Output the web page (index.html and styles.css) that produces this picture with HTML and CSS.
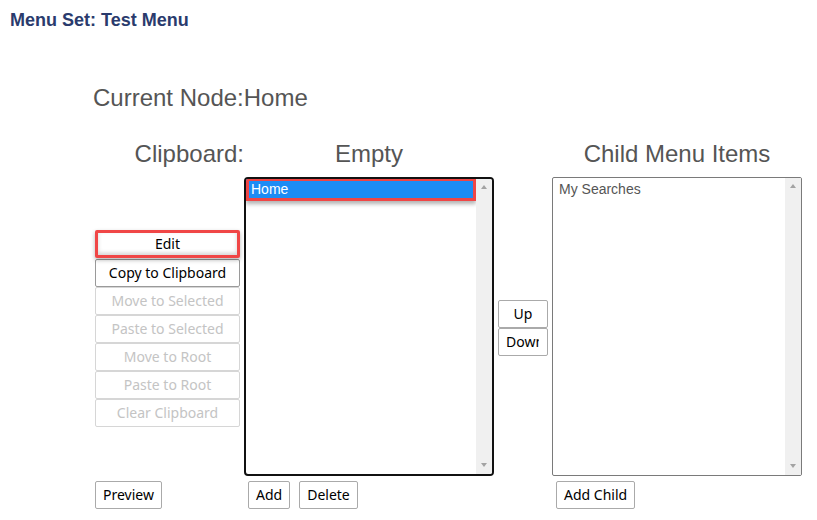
FILE: index.html
```html
<!DOCTYPE html>
<html>
<head>
<meta charset="utf-8">
<link rel="stylesheet" href="styles.css">
</head>
<body>
<div class="title">Menu Set: Test Menu</div>
<div class="current">Current Node:Home</div>
<div class="editor">
  <div class="heading heading--clip">Clipboard:</div>
  <div class="heading">Empty</div>
  <div></div>
  <div class="heading">Child Menu Items</div>

  <div class="actions">
    <button class="btn btn--block btn--focus">Edit</button>
    <button class="btn btn--block">Copy to Clipboard</button>
    <button class="btn btn--block" disabled>Move to Selected</button>
    <button class="btn btn--block" disabled>Paste to Selected</button>
    <button class="btn btn--block" disabled>Move to Root</button>
    <button class="btn btn--block" disabled>Paste to Root</button>
    <button class="btn btn--block" disabled>Clear Clipboard</button>
  </div>

  <div class="listbox listbox--active">
    <div class="options">
      <div class="option option--selected">Home</div>
    </div>
    <div class="scrollbar">
      <span class="arrow arrow--up"></span>
      <span class="arrow arrow--down"></span>
    </div>
  </div>

  <div class="order">
    <button class="btn btn--order">Up</button>
    <button class="btn btn--order"><span class="clip">Down</span></button>
  </div>

  <div class="listbox">
    <div class="options options--plain">
      <div class="option">My Searches</div>
    </div>
    <div class="scrollbar">
      <span class="arrow arrow--up"></span>
      <span class="arrow arrow--down"></span>
    </div>
  </div>

  <div class="foot"><button class="btn">Preview</button></div>
  <div class="foot foot--inset"><button class="btn">Add</button><button class="btn">Delete</button></div>
  <div></div>
  <div class="foot foot--inset"><button class="btn">Add Child</button></div>
</div>
</body>
</html>
```

FILE: styles.css
```css
* { box-sizing: border-box; }
body {
  margin: 0;
  background: #fff;
  font-family: "Liberation Sans", Arial, sans-serif;
}
.title {
  padding: 10px 0 0 10px;
  font-size: 18px;
  line-height: 21px;
  font-weight: bold;
  color: #2a3b6d;
}
.current {
  margin-top: 53px;
  padding-left: 93px;
  font-size: 24px;
  line-height: 28px;
  color: #555;
}
.editor {
  margin-top: 28px;
  padding-left: 95px;
  display: grid;
  grid-template-columns: 145px 250px 50px 250px;
  column-gap: 4px;
  align-items: start;
}
.heading {
  font-size: 24px;
  line-height: 28px;
  color: #555;
  text-align: center;
  white-space: nowrap;
}
.heading--clip {
  text-align: right;
  margin-right: -4px;
}
.btn {
  font-family: "Noto Sans", "Open Sans", sans-serif;
  font-size: 14px;
  height: 28px;
  line-height: 26px;
  padding: 0 7px;
  background: #fff;
  color: #000;
  border: 1px solid #9a9a9a;
  border-radius: 2px;
  white-space: nowrap;
  cursor: default;
}
.btn:disabled {
  color: #c4c4c4;
  border-color: #d6d6d6;
}
.btn--block {
  display: block;
  width: 145px;
  padding: 0;
  text-align: center;
}
.actions {
  margin-top: 62px;
  display: flex;
  flex-direction: column;
}
.btn--focus {
  border: 3px solid #f04646;
  line-height: 22px;
  margin-bottom: 1px;
  box-shadow: 0 2px 4px rgba(0,0,0,0.3), inset 0 -2px 4px rgba(0,0,0,0.18);
  position: relative;
}
.listbox {
  margin-top: 9px;
  height: 299px;
  border: 1px solid #7a7a7a;
  border-radius: 2px;
  display: flex;
  overflow: hidden;
}
.listbox--active {
  border: 2px solid #111;
  border-radius: 4px;
}
.options {
  flex: 1;
  min-width: 0;
}
.options--plain {
  padding: 3px 6px;
}
.option {
  font-size: 14px;
  line-height: 17px;
  color: #555;
  white-space: nowrap;
}
.option--selected {
  margin-top: -1px;
  border: 3px solid #f04646;
  background: #1d8cf5;
  color: #fff;
  padding-left: 2px;
  box-shadow: 0 3px 4px rgba(0,0,0,0.3);
}
.scrollbar {
  width: 16px;
  flex: none;
  background: #f0f0f0;
  display: flex;
  flex-direction: column;
  justify-content: space-between;
  align-items: center;
  padding: 6px 0 7px;
}
.arrow {
  width: 0;
  height: 0;
  border-left: 3.5px solid transparent;
  border-right: 3.5px solid transparent;
}
.arrow--up { border-bottom: 4px solid #a3a3a3; }
.arrow--down { border-top: 4px solid #a3a3a3; }
.order {
  margin-top: 132px;
  display: flex;
  flex-direction: column;
}
.btn--order {
  display: block;
  width: 50px;
  padding: 0;
  text-align: center;
  border-color: #aaa;
}
.clip {
  display: block;
  width: 33px;
  margin-left: 7px;
  overflow: hidden;
  text-align: left;
}
.foot {
  margin-top: 5px;
  display: flex;
  gap: 9px;
}
.foot .btn { border-color: #aaa; }
.foot--inset { padding-left: 4px; }
```
